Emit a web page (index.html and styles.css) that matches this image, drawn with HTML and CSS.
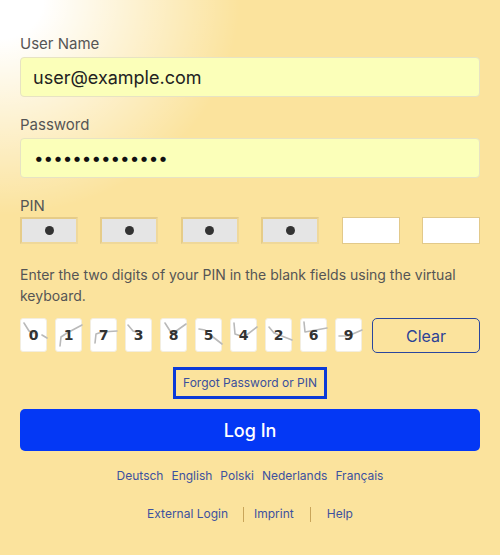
FILE: index.html
```html
<!DOCTYPE html>
<html lang="en">
<head>
<meta charset="utf-8">
<title>Login</title>
<link rel="stylesheet" href="styles.css">
</head>
<body>
<div class="page">
  <form class="login">
    <label class="label" for="user">User Name</label>
    <input class="field" id="user" type="text" value="user@example.com">
    <label class="label" for="pw">Password</label>
    <input class="field pw" id="pw" type="password" value="12345678901234">
    <div class="label pin-label">PIN</div>
    <div class="pin-row">
      <div class="pin filled"><span class="dot"></span></div>
      <div class="pin filled"><span class="dot"></span></div>
      <div class="pin filled"><span class="dot"></span></div>
      <div class="pin filled"><span class="dot"></span></div>
      <div class="pin"></div>
      <div class="pin"></div>
    </div>
    <p class="hint">Enter the two digits of your PIN in the blank fields using the virtual keyboard.</p>
    <div class="keys">
      <button type="button" class="key"><svg class="noise" viewBox="0 0 27 34"><polyline points="3,4 8,12 13,14"/><polyline points="21,16 26,19"/></svg><span>0</span></button>
      <button type="button" class="key"><svg class="noise" viewBox="0 0 27 34"><polyline points="4,27 5,18 11,14 26,6"/></svg><span>1</span></button>
      <button type="button" class="key"><svg class="noise" viewBox="0 0 27 34"><polyline points="4,24 5,15 11,13 26,12"/></svg><span>7</span></button>
      <button type="button" class="key"><svg class="noise" viewBox="0 0 27 34"><polyline points="2,6 7,12 11,13"/></svg><span>3</span></button>
      <button type="button" class="key"><svg class="noise" viewBox="0 0 27 34"><polyline points="4,4 11,15 25,5"/></svg><span>8</span></button>
      <button type="button" class="key"><svg class="noise" viewBox="0 0 27 34"><polyline points="3,10 9,11"/><polyline points="17,18 26,25"/></svg><span>5</span></button>
      <button type="button" class="key"><svg class="noise" viewBox="0 0 27 34"><polyline points="3,4 4,15 13,18 26,8"/></svg><span>4</span></button>
      <button type="button" class="key"><svg class="noise" viewBox="0 0 27 34"><polyline points="3,8 8,14 26,21"/></svg><span>2</span></button>
      <button type="button" class="key"><svg class="noise" viewBox="0 0 27 34"><polyline points="3,3 4,13 26,9"/></svg><span>6</span></button>
      <button type="button" class="key"><svg class="noise" viewBox="0 0 27 34"><polyline points="3,17 12,17 26,11"/></svg><span>9</span></button>
      <button type="button" class="clear">Clear</button>
    </div>
    <div class="forgot-wrap"><a class="forgot" href="#">Forgot Password or PIN</a></div>
    <button type="button" class="submit">Log In</button>
    <nav class="langs">
      <a href="#">Deutsch</a>
      <a href="#">English</a>
      <a href="#">Polski</a>
      <a href="#">Nederlands</a>
      <a href="#">Français</a>
    </nav>
    <nav class="footer">
      <a href="#">External Login</a><span class="sep sep1"></span><a href="#">Imprint</a><span class="sep sep2"></span><a href="#">Help</a>
    </nav>
  </form>
</div>
</body>
</html>
```

FILE: styles.css
```css
html, body {
  margin: 0;
  padding: 0;
}
body {
  width: 500px;
  height: 555px;
  overflow: hidden;
  font-family: Inter, "Noto Sans", "DejaVu Sans", sans-serif;
  background-color: #fbe39d;
  background-image: radial-gradient(240px 215px at 0 0, rgba(255,255,255,1) 18%, rgba(255,255,255,0.55) 55%, rgba(255,255,255,0) 100%);
  background-repeat: no-repeat;
}
.page {
  padding: 34px 20px 0 20px;
}
.login {
  display: flex;
  flex-direction: column;
}
.label {
  display: block;
  font-size: 15px;
  line-height: 19px;
  color: #555;
  margin-bottom: 4px;
}
.field {
  box-sizing: border-box;
  width: 100%;
  height: 40px;
  margin: 0 0 18px 0;
  padding: 0 12px;
  border: 1px solid #e7e3c3;
  border-radius: 4px;
  background: #fbffb9;
  font-family: Inter, "Noto Sans", sans-serif;
  font-size: 18px;
  color: #222;
  outline: none;
}
.pw {
  font-size: 17px;
  letter-spacing: 0;
  color: #111;
  padding-left: 13px;
}
.pin-label {
  margin-bottom: 2px;
}
.pin-row {
  display: flex;
  justify-content: space-between;
}
.pin {
  box-sizing: border-box;
  width: 58px;
  height: 27px;
  background: #fff;
  border: 1px solid #e2c98a;
  display: flex;
  align-items: center;
  justify-content: center;
}
.pin.filled {
  background: #e5e5e5;
  border: 2px solid #efd89a;
  border-top-color: #e6cc88;
  border-left-color: #e6cc88;
}
.dot {
  width: 9px;
  height: 9px;
  border-radius: 50%;
  background: #333;
}
.hint {
  margin: 20px 0 12px 0;
  font-size: 14px;
  line-height: 21px;
  color: #555;
}
.keys {
  display: flex;
  gap: 8px;
  height: 35px;
}
.key {
  position: relative;
  width: 27px;
  height: 34px;
  padding: 0;
  border: 1px solid #f3eee0;
  border-radius: 3px;
  background: #fff;
  font-family: "DejaVu Sans", Verdana, sans-serif;
  font-weight: bold;
  font-size: 14px;
  color: #333;
  display: flex;
  align-items: center;
  justify-content: center;
}
.key span {
  position: relative;
}
.noise {
  position: absolute;
  left: 0;
  top: 0;
  width: 27px;
  height: 34px;
}
.noise polyline {
  fill: none;
  stroke: #b9b9b9;
  stroke-width: 1.6;
  stroke-linejoin: round;
  stroke-linecap: round;
}
.clear {
  flex: 1;
  margin-left: 2px;
  height: 35px;
  border: 1px solid #2a469e;
  border-radius: 5px;
  background: transparent;
  font-family: Inter, "Noto Sans", sans-serif;
  font-size: 16px;
  color: #2c4296;
}
.forgot-wrap {
  display: flex;
  justify-content: center;
  margin-top: 14px;
}
.forgot {
  display: block;
  border: 3px solid #0b3ad8;
  padding: 0 7px;
  line-height: 26px;
  font-size: 12px;
  color: #3a4f9c;
  text-decoration: none;
}
.submit {
  margin-top: 10px;
  height: 42px;
  border: none;
  border-radius: 5px;
  background: #0438f5;
  color: #fff;
  font-family: Inter, "Noto Sans", sans-serif;
  font-size: 18px;
  font-weight: 500;
}
.langs {
  display: flex;
  justify-content: center;
  gap: 8px;
  margin-top: 16px;
  font-size: 12px;
  line-height: 18px;
}
.langs a, .footer a {
  color: #3d519f;
  text-decoration: none;
}
.footer {
  display: flex;
  justify-content: center;
  align-items: center;
  margin-top: 20px;
  font-size: 12px;
  line-height: 18px;
}
.sep {
  display: inline-block;
  width: 0;
  height: 15px;
  border-left: 1px solid #c9a55a;
}
.sep1 {
  margin: 0 10px 0 15px;
}
.sep2 {
  margin: 0 16px 0 16px;
}
```
